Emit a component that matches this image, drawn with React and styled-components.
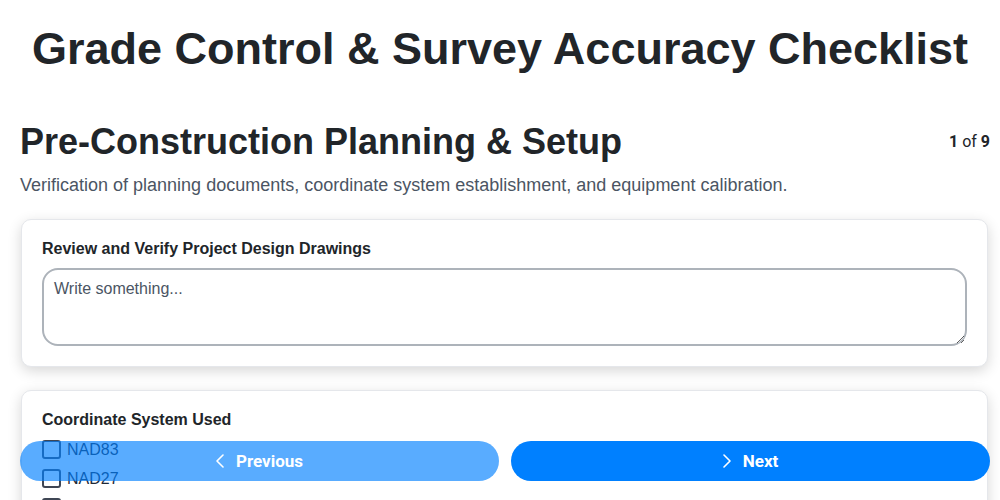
import styled, { createGlobalStyle } from "styled-components"

const GlobalStyle = createGlobalStyle`
  html {
    scrollbar-width: none;
  }
  html::-webkit-scrollbar {
    display: none;
  }
  body {
    margin: 0;
    background: #fff;
    font-family: "Liberation Sans", Arial, sans-serif;
    color: #212529;
  }
`

const Page = styled.div`
  padding: 22px 10px 120px 20px;
`

const Title = styled.h1`
  margin: 0 0 45px -10px;
  font-size: 45px;
  line-height: 53px;
  font-weight: 700;
  text-align: center;
  color: #212529;
`

const SectionHeader = styled.div`
  display: flex;
  align-items: center;
  justify-content: space-between;
`

const SectionTitle = styled.h2`
  margin: 0;
  font-size: 36px;
  line-height: 43px;
  font-weight: 700;
  color: #212529;
`

const Counter = styled.div`
  font-family: Roboto, "Liberation Sans", sans-serif;
  font-size: 16px;
  color: #212529;

  b {
    font-weight: 700;
  }
`

const Description = styled.p`
  margin: 10px 0 21px;
  font-size: 18px;
  line-height: 25px;
  color: #4b5563;
`

const Card = styled.div`
  margin: 0 2px 23px 1px;
  padding: 20px;
  background: #fff;
  border: 1px solid #e5e7eb;
  border-radius: 10px;
  box-shadow: 0 4px 14px rgba(0, 0, 0, 0.16);
`

const Label = styled.div`
  font-size: 16px;
  font-weight: 700;
  line-height: 18px;
  color: #212529;
  margin-bottom: 10px;
`

const TextArea = styled.textarea`
  display: block;
  box-sizing: border-box;
  width: 100%;
  height: 78px;
  padding: 10px;
  border: 2px solid #adb3ba;
  border-radius: 16px;
  font-family: "Liberation Sans", Arial, sans-serif;
  font-size: 16px;
  line-height: 18px;
  color: #212529;
  outline: none;

  &::placeholder {
    color: #4b5563;
  }
`

const OptionList = styled.div`
  display: flex;
  flex-direction: column;
  gap: 10px;
  padding-top: 1px;
`

const Option = styled.label`
  display: flex;
  align-items: center;
  gap: 6px;
  font-size: 16px;
  line-height: 19px;
  color: #1f2937;
`

const Box = styled.span`
  box-sizing: border-box;
  width: 19px;
  height: 19px;
  border: 2px solid #3f4654;
  border-radius: 3px;
  flex: 0 0 auto;
`

const NavBar = styled.div`
  position: fixed;
  left: 20px;
  right: 10px;
  bottom: 19px;
  display: flex;
  gap: 12px;
`

const NavButton = styled.button`
  flex: 1;
  height: 40px;
  display: flex;
  align-items: center;
  justify-content: center;
  gap: 12px;
  border: none;
  border-radius: 20px;
  background: #0080ff;
  color: #fff;
  font-family: Roboto, "Liberation Sans", sans-serif;
  font-size: 17px;
  font-weight: 700;
  opacity: ${(p) => (p.disabled ? 0.65 : 1)};
  cursor: pointer;
`

const Chevron = ({ dir }) => (
  <svg width="8" height="14" viewBox="0 0 8 14" fill="none">
    <polyline
      points={dir === "left" ? "7,1 1,7 7,13" : "1,1 7,7 1,13"}
      stroke="currentColor"
      strokeWidth="1.6"
      strokeLinecap="round"
      strokeLinejoin="round"
    />
  </svg>
)

const options = ["NAD83", "NAD27", "WGS84", "Local / Assumed", "Other"]

export default function App() {
  return (
    <>
      <GlobalStyle />
      <Page>
        <Title>Grade Control &amp; Survey Accuracy Checklist</Title>
        <SectionHeader>
          <SectionTitle>Pre-Construction Planning &amp; Setup</SectionTitle>
          <Counter>
            <b>1</b> of <b>9</b>
          </Counter>
        </SectionHeader>
        <Description>
          Verification of planning documents, coordinate system establishment, and equipment calibration.
        </Description>

        <Card>
          <Label>Review and Verify Project Design Drawings</Label>
          <TextArea placeholder="Write something..." />
        </Card>

        <Card>
          <Label>Coordinate System Used</Label>
          <OptionList>
            {options.map((o) => (
              <Option key={o}>
                <Box />
                {o}
              </Option>
            ))}
          </OptionList>
        </Card>
      </Page>

      <NavBar>
        <NavButton disabled>
          <Chevron dir="left" />
          Previous
        </NavButton>
        <NavButton>
          <Chevron dir="right" />
          Next
        </NavButton>
      </NavBar>
    </>
  )
}
